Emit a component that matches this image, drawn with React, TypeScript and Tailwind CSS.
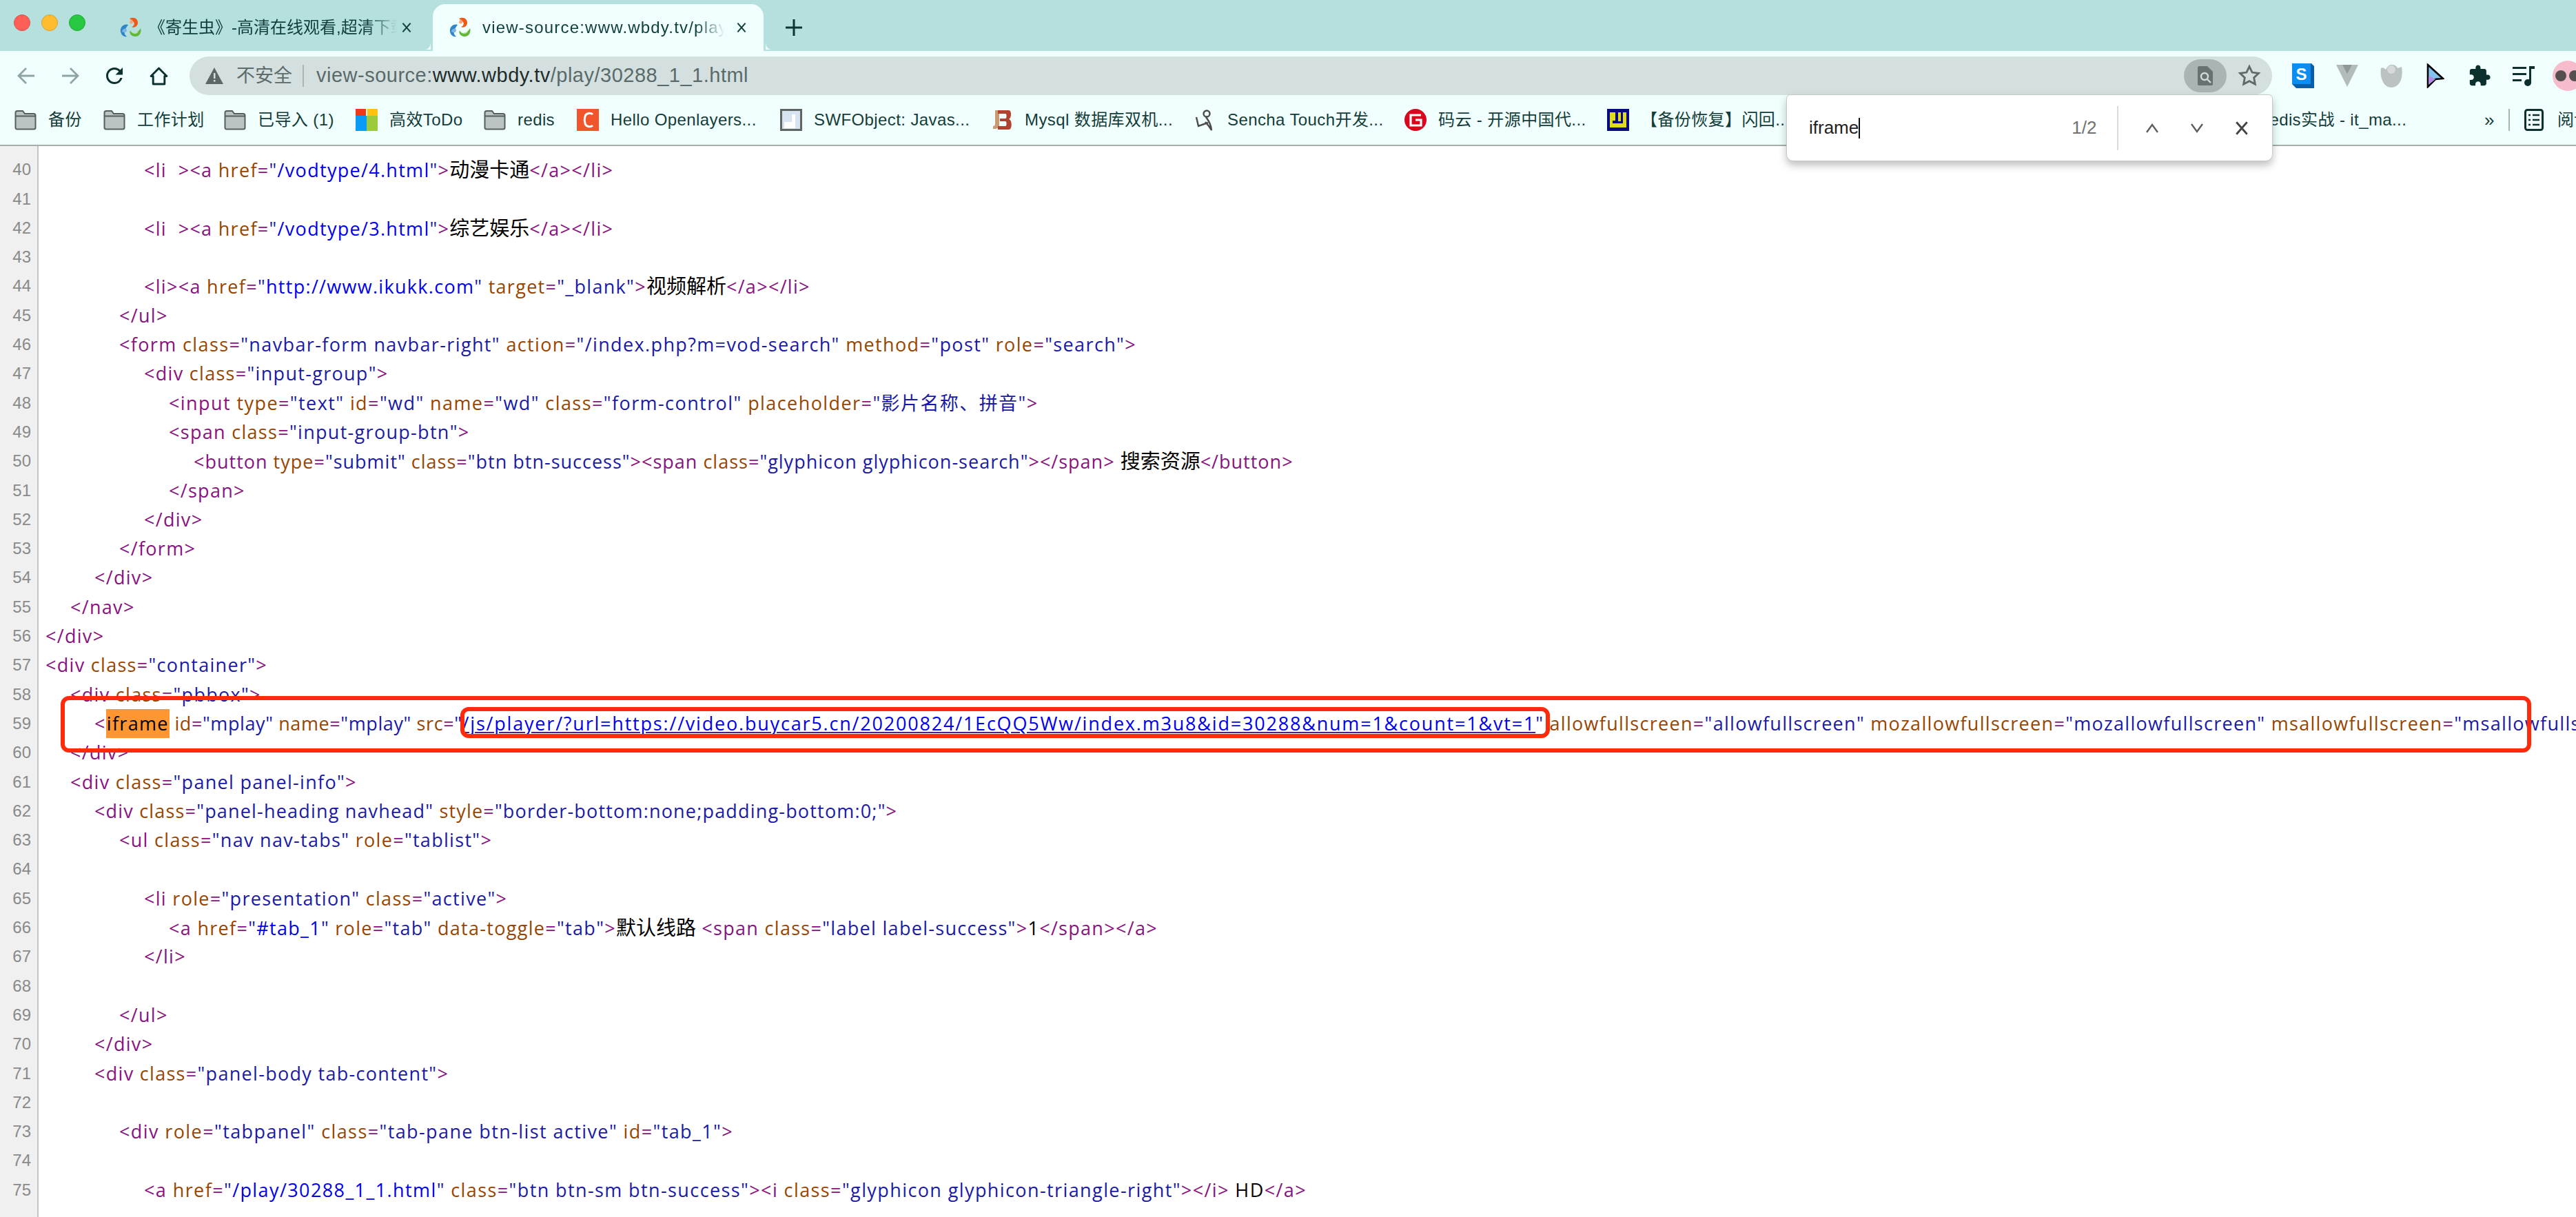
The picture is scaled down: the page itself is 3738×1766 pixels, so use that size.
import React from "react";

const SANS = "font-['Liberation_Sans','Noto_Sans_CJK_SC',sans-serif]";

const INDENT: Record<number, string> = {
  0: "pl-[10px]",
  2: "pl-[46px]",
  4: "pl-[81px]",
  6: "pl-[117px]",
  8: "pl-[153px]",
  10: "pl-[189px]",
  12: "pl-[225px]",
};

const TRACK: Record<number, string> = {
  46: "tracking-[1.37px]",
  48: "tracking-[1.42px]",
  50: "tracking-[1px]",
  62: "tracking-[1.18px]",
  73: "tracking-[1.4px]",
  75: "tracking-[1.4px]",
};

const LINES: [number, number, string][] = [
  [39, 0, ""],
  [40, 8, '<li  ><a href="/vodtype/4.html">动漫卡通</a></li>'],
  [41, 0, ""],
  [42, 8, '<li  ><a href="/vodtype/3.html">综艺娱乐</a></li>'],
  [43, 0, ""],
  [44, 8, '<li><a href="http://www.ikukk.com" target="_blank">视频解析</a></li>'],
  [45, 6, "</ul>"],
  [46, 6, '<form class="navbar-form navbar-right" action="/index.php?m=vod-search" method="post" role="search">'],
  [47, 8, '<div class="input-group">'],
  [48, 10, '<input type="text" id="wd" name="wd" class="form-control" placeholder="影片名称、拼音">'],
  [49, 10, '<span class="input-group-btn">'],
  [50, 12, '<button type="submit" class="btn btn-success"><span class="glyphicon glyphicon-search"></span> 搜索资源</button>'],
  [51, 10, "</span>"],
  [52, 8, "</div>"],
  [53, 6, "</form>"],
  [54, 4, "</div>"],
  [55, 2, "</nav>"],
  [56, 0, "</div>"],
  [57, 0, '<div class="container">'],
  [58, 2, '<div class="pbbox">'],
  [59, 4, '<iframe id="mplay" name="mplay" src="/js/player/?url=https://video.buycar5.cn/20200824/1EcQQ5Ww/index.m3u8&id=30288&num=1&count=1&vt=1" allowfullscreen="allowfullscreen" mozallowfullscreen="mozallowfullscreen" msallowfullscreen="msallowfullscreen" oallowfullscreen="oallowfullscreen"'],
  [60, 2, "</div>"],
  [61, 2, '<div class="panel panel-info">'],
  [62, 4, '<div class="panel-heading navhead" style="border-bottom:none;padding-bottom:0;">'],
  [63, 6, '<ul class="nav nav-tabs" role="tablist">'],
  [64, 0, ""],
  [65, 8, '<li role="presentation" class="active">'],
  [66, 10, '<a href="#tab_1" role="tab" data-toggle="tab">默认线路 <span class="label label-success">1</span></a>'],
  [67, 8, "</li>"],
  [68, 0, ""],
  [69, 6, "</ul>"],
  [70, 4, "</div>"],
  [71, 4, '<div class="panel-body tab-content">'],
  [72, 0, ""],
  [73, 6, '<div role="tabpanel" class="tab-pane btn-list active" id="tab_1">'],
  [74, 0, ""],
  [75, 8, '<a href="/play/30288_1_1.html" class="btn btn-sm btn-success"><i class="glyphicon glyphicon-triangle-right"></i> HD</a>'],
];

const TAG = "text-[#881280]";
const ATTR = "text-[#994500]";
const VAL = "text-[#1a1aa6]";
const LINK = "text-[#0000ee]";

function colorize(src: string): React.ReactNode[] {
  const re = /(<\/?[a-zA-Z0-9]+|\/?>)|([a-zA-Z-]+)(?==)|(=)|("[^"]*")|([\u3000-\u9fff]+)/g;
  const out: React.ReactNode[] = [];
  let last = 0;
  let attr = "";
  let m: RegExpExecArray | null;
  let k = 0;
  let pre = src.startsWith("<iframe") ? "tracking-[0.6px]" : "";
  while ((m = re.exec(src))) {
    if (m.index > last) out.push(<span key={k++} className={pre}>{src.slice(last, m.index)}</span>);
    last = m.index + m[0].length;
    if (m[1]) {
      if (m[1] === "<iframe") {
        out.push(<span key={k++} className={TAG}>{"<"}</span>);
        out.push(
          <span key={k++} className="inline-block w-[92px] bg-[#ff9632] text-center text-black">iframe</span>
        );
      } else out.push(<span key={k++} className={TAG}>{m[1]}</span>);
    } else if (m[2]) {
      attr = m[2];
      out.push(<span key={k++} className={`${ATTR} ${pre}`}>{m[2]}</span>);
    } else if (m[3]) {
      out.push(<span key={k++} className={`${TAG} ${pre}`}>=</span>);
    } else if (m[4]) {
      if (attr === "href" || attr === "src") {
        const inner = m[4].slice(1, -1);
        out.push(<span key={k++} className={`${VAL} ${pre}`}>"</span>);
        out.push(
          <span key={k++} className={attr === "src" ? `${LINK} tracking-[1.8px] underline decoration-[#551a8b]` : LINK}>{inner}</span>
        );
        out.push(<span key={k++} className={VAL}>"</span>);
        if (attr === "src") pre = "";
      } else out.push(<span key={k++} className={`${VAL} ${pre}`}>{m[4]}</span>);
    } else if (m[5]) {
      out.push(<span key={k++} className="text-[29px] tracking-normal text-black">{m[5]}</span>);
    }
  }
  if (last < src.length) out.push(<span key={k++} className="text-black">{src.slice(last)}</span>);
  return out;
}

function Favicon() {
  return (
    <svg viewBox="0 0 32 32" className="h-8 w-8 shrink-0">
      <path d="M14 3c6-3 12 0 12 6 0 5-5 8-9 6 3-1 5-4 3-7-1-2-4-3-6-5z" fill="#ee5a14" />
      <path d="M16 4c3 1 4 4 2 6-2 1-3 0-4-1 0-2 1-3 2-5z" fill="#f4a37a" />
      <path d="M12 12c-6-2-12 3-11 10 1 5 5 8 9 7-3-2-4-5-3-8 1-4 3-6 5-9z" fill="#2f86c9" />
      <path d="M3 22c0-3 3-5 6-4 2 1 1 4-1 5-2 0-3 0-5-1z" fill="#7db7e2" />
      <path d="M30 17c2 6-2 13-9 12-5-1-8-5-6-9 1 3 4 5 7 4 4-1 6-4 8-7z" fill="#63b83a" />
      <path d="M19 24c2 2 6 1 8-2-2 1-6 1-8 2z" fill="#bde3a3" />
    </svg>
  );
}

function CloseX({ cls }: { cls: string }) {
  return (
    <svg viewBox="0 0 20 20" className={cls} fill="none" stroke="currentColor" strokeWidth="2.6">
      <path d="M3 2l14 16M17 2 3 18" />
    </svg>
  );
}

function Folder() {
  return (
    <svg viewBox="0 0 32 30" className="h-[30px] w-8 shrink-0">
      <path d="M1.5 26V4.5c0-1.5 1-2.5 2.5-2.5h8l3 4h13c1.5 0 2.5 1 2.5 2.5V26c0 1.5-1 2.5-2.5 2.5H4c-1.5 0-2.5-1-2.5-2.5z" fill="#bcc4c3" stroke="#555e5e" strokeWidth="2" />
      <path d="M2 9.5h28" stroke="#555e5e" strokeWidth="2" />
    </svg>
  );
}

function Ms() {
  return (
    <svg viewBox="0 0 32 32" className="h-8 w-8 shrink-0">
      <rect x="0" y="0" width="15" height="10" fill="#f03a17" />
      <rect x="17" y="0" width="15" height="10" fill="#ffc20e" />
      <rect x="0" y="10" width="16" height="22" fill="#0a9cf5" />
      <rect x="16" y="10" width="16" height="22" fill="#9bcb3c" />
    </svg>
  );
}

function CIcon() {
  return (
    <svg viewBox="0 0 32 32" className="h-8 w-8 shrink-0">
      <rect width="32" height="32" fill="#f2552c" />
      <path d="M23 8c-3-3-10-2-11 3-1 3-1 7 0 10 1 5 8 6 11 3" fill="none" stroke="#fff" strokeWidth="3" />
    </svg>
  );
}

function DocIcon() {
  return (
    <svg viewBox="0 0 32 32" className="h-8 w-8 shrink-0">
      <rect x="1.5" y="1.5" width="29" height="29" fill="#d8e3f2" stroke="#5f6563" strokeWidth="3" />
      <rect x="17" y="8" width="5" height="20" fill="#fff" />
      <rect x="6" y="19" width="16" height="9" fill="#fff" />
    </svg>
  );
}

function JbIcon() {
  return (
    <svg viewBox="0 0 32 32" className="h-8 w-8 shrink-0">
      <path d="M6 2h6v22c0 3-2 5-9 5v-4c2 0 3-1 3-3z" fill="#c99a70" />
      <path d="M10 2h16c4 0 4 11 0 13 5 1 5 15 0 15H10v-5h11c2 0 2-7 0-7h-8v-4h8c2 0 2-7 0-7H10z" fill="#b0432f" />
    </svg>
  );
}

function SenchaIcon() {
  return (
    <svg viewBox="0 0 32 32" className="h-8 w-8 shrink-0" fill="none" stroke="#4a4a4a" strokeWidth="2.4">
      <circle cx="19" cy="7" r="4.5" />
      <path d="M18 12c2 3 7 8 8 19-3-5-8-11-9-12" />
      <path d="M4 12l3 13 14-5" />
    </svg>
  );
}

function GIcon() {
  return (
    <svg viewBox="0 0 32 32" className="h-8 w-8 shrink-0">
      <circle cx="16" cy="16" r="16" fill="#d9061e" />
      <path d="M24 9H9v15h15v-8h-8" fill="none" stroke="#fff" strokeWidth="3.2" />
    </svg>
  );
}

function JIcon() {
  return (
    <svg viewBox="0 0 32 32" className="h-8 w-8 shrink-0">
      <rect width="32" height="32" fill="#0a0a80" />
      <path d="M4 5h24v22H4z" fill="#e0dc1a" />
      <path d="M12 5h4v13h4V5h3v16H8v-4h4z" fill="#0a0a80" />
    </svg>
  );
}

const BOOKMARKS: { icon: React.ReactNode; label: string; w: string; tw: string }[] = [
  { icon: <Folder />, label: "备份", w: "w-[129px]", tw: "w-[60px]" },
  { icon: <Folder />, label: "工作计划", w: "w-[175px]", tw: "w-[110px]" },
  { icon: <Folder />, label: "已导入 (1)", w: "w-[191px]", tw: "w-[125px]" },
  { icon: <Ms />, label: "高效ToDo", w: "w-[186px]", tw: "w-[120px]" },
  { icon: <Folder />, label: "redis", w: "w-[135px]", tw: "w-[70px]" },
  { icon: <CIcon />, label: "Hello Openlayers...", w: "w-[295px]", tw: "w-[230px]" },
  { icon: <DocIcon />, label: "SWFObject: Javas...", w: "w-[306px]", tw: "w-[240px]" },
  { icon: <JbIcon />, label: "Mysql 数据库双机...", w: "w-[294px]", tw: "w-[230px]" },
  { icon: <SenchaIcon />, label: "Sencha Touch开发...", w: "w-[306px]", tw: "w-[240px]" },
  { icon: <GIcon />, label: "码云 - 开源中国代...", w: "w-[294px]", tw: "w-[230px]" },
  { icon: <JIcon />, label: "【备份恢复】闪回...", w: "w-[330px]", tw: "w-[260px]" },
];

export default function App() {
  return (
    <div className={`relative flex h-[1766px] w-[3738px] flex-col overflow-hidden bg-white ${SANS}`}>
      {/* tab strip */}
      <div className="flex h-[74px] shrink-0 items-end bg-[#b5e0dd] text-[24px] text-[#10403d]">
        <div className="flex h-full w-[148px] shrink-0 gap-4 pl-5 pt-[21px]">
          <div className="h-6 w-6 rounded-full border border-[#d9504f] bg-[#ff5f57]" />
          <div className="h-6 w-6 rounded-full border border-[#dba32a] bg-[#febc2e]" />
          <div className="h-6 w-6 rounded-full border border-[#22a83a] bg-[#28c840]" />
        </div>
        <div className="flex h-[68px] w-[480px] shrink-0 items-center pl-[26px]">
          <Favicon />
          <div className="ml-[10px] w-[360px] shrink-0 overflow-hidden whitespace-nowrap [mask-image:linear-gradient(to_right,black_88%,transparent)]">
            《寄生虫》-高清在线观看,超清下载
          </div>
          <CloseX cls="ml-[6px] h-[22px] w-4 shrink-0" />
        </div>
        <div className="relative flex h-[68px] w-[480px] shrink-0 items-center rounded-t-[18px] bg-[#f0fffe] pl-6">
          <svg viewBox="0 0 16 16" className="absolute bottom-0 left-[-12px] h-4 w-3">
            <path d="M12 0v16H0c8 0 12-6 12-16z" fill="#f0fffe" />
          </svg>
          <svg viewBox="0 0 16 16" className="absolute bottom-0 right-[-12px] h-4 w-3">
            <path d="M4 0v16h12C8 16 4 10 4 0z" fill="#f0fffe" />
          </svg>
          <Favicon />
          <div className="ml-4 w-[352px] shrink-0 overflow-hidden whitespace-nowrap tracking-[1.2px] [mask-image:linear-gradient(to_right,black_88%,transparent)]">
            view-source:www.wbdy.tv/play/30288_1_1.html
          </div>
          <CloseX cls="ml-[16px] h-[22px] w-4 shrink-0" />
        </div>
        <div className="flex h-[68px] w-[88px] items-center justify-center">
          <svg viewBox="0 0 26 26" className="h-[26px] w-[26px]" stroke="#0c3533" strokeWidth="3">
            <path d="M13 1v24M1 13h24" />
          </svg>
        </div>
      </div>

      {/* toolbar */}
      <div className="flex h-[138px] shrink-0 flex-col border-b-2 border-[#a8adac] bg-[#f0fffe] text-[#143c39]">
        <div className="flex h-[72px] shrink-0 items-start pl-[6px] pt-2">
          <div className="flex h-14 w-16 shrink-0 items-center justify-center">
            <svg viewBox="0 0 26 26" className="h-[26px] w-[26px]" fill="none" stroke="#8fa5a3" strokeWidth="2.8">
              <path d="M25 13H3M13 2 2 13l11 11" />
            </svg>
          </div>
          <div className="flex h-14 w-16 shrink-0 items-center justify-center">
            <svg viewBox="0 0 26 26" className="h-[26px] w-[26px]" fill="none" stroke="#8fa5a3" strokeWidth="2.8">
              <path d="M1 13h22M13 2l11 11-11 11" />
            </svg>
          </div>
          <div className="flex h-14 w-16 shrink-0 items-center justify-center">
            <svg viewBox="0 0 24 24" className="h-9 w-9" fill="#0c302e">
              <path d="M17.65 6.35A7.958 7.958 0 0 0 12 4c-4.42 0-7.99 3.58-7.99 8s3.57 8 7.99 8c3.73 0 6.84-2.55 7.73-6h-2.08A5.99 5.99 0 0 1 12 18c-3.31 0-6-2.69-6-6s2.69-6 6-6c1.66 0 3.14.69 4.22 1.78L13 11h7V4l-2.35 2.35z" />
            </svg>
          </div>
          <div className="flex h-14 w-16 shrink-0 items-center justify-center">
            <svg viewBox="0 0 26 26" className="h-[27px] w-[27px]" fill="none" stroke="#0c302e" strokeWidth="2.8" strokeLinejoin="round">
              <path d="M2 13 13 2l11 11h-3v11H5V13z" />
            </svg>
          </div>

          <div className="ml-[13px] flex h-14 w-[3022px] shrink-0 items-center rounded-full bg-[#d4e0e0] pl-[23px]">
            <svg viewBox="0 0 26 24" className="h-6 w-[26px] shrink-0">
              <path d="M13 0 26 24H0z" fill="#5d6766" />
              <rect x="12" y="8" width="2.5" height="8" fill="#d4e0e0" />
              <rect x="12" y="18" width="2.5" height="2.5" fill="#d4e0e0" />
            </svg>
            <span className="ml-[19px] text-[27px] text-[#5d6b6a]">不安全</span>
            <div className="ml-[15px] h-8 w-[2px] bg-[#aab6b5]" />
            <div className="ml-[18px] flex-1 whitespace-nowrap text-[29px] tracking-[0.5px]">
              <span className="text-[#5a6a69]">view-source:</span>
              <span className="text-[#1d2b2a]">www.wbdy.tv</span>
              <span className="text-[#5a6a69]">/play/30288_1_1.html</span>
            </div>
            <div className="flex h-12 w-[62px] shrink-0 items-center justify-center rounded-full bg-[#a9b5b4]">
              <svg viewBox="0 0 22 28" className="h-7 w-[22px]">
                <path d="M2 0h12l8 8v18c0 1-1 2-2 2H2c-1 0-2-1-2-2V2C0 1 1 0 2 0z" fill="#667372" />
                <circle cx="10" cy="15" r="5" fill="none" stroke="#d0dad9" strokeWidth="2.4" />
                <path d="m14 19 5 5" stroke="#d0dad9" strokeWidth="2.4" />
              </svg>
            </div>
            <div className="flex w-[66px] shrink-0 items-center justify-center">
              <svg viewBox="0 0 24 24" className="h-[34px] w-[34px]" fill="none" stroke="#5e6b6a" strokeWidth="2">
                <path d="m12 2.5 2.9 6 6.6.9-4.8 4.6 1.2 6.5-5.9-3.1-5.9 3.1 1.2-6.5L2.5 9.4l6.6-.9z" />
              </svg>
            </div>
          </div>

          <div className="ml-[13px] flex h-14 shrink-0 items-center">
            <div className="flex w-16 shrink-0 items-center justify-center">
              <svg viewBox="0 0 32 36" className="h-9 w-8">
                <path d="M27 0h1l4 4v32H6l-6-6z" fill="#0a5ea8" />
                <rect width="27" height="30" fill="#0b8df2" />
                <text x="13.5" y="24" textAnchor="middle" fontFamily="Liberation Sans" fontWeight="700" fontSize="24" fill="#fff">S</text>
              </svg>
            </div>
            <div className="flex w-16 shrink-0 items-center justify-center">
              <svg viewBox="0 0 32 32" className="h-8 w-8">
                <path d="M0 0h32L16 32z" fill="#b4bcbb" />
                <path d="M9 0h14l-7 13z" fill="#8f9897" />
              </svg>
            </div>
            <div className="flex w-16 shrink-0 items-center justify-center">
              <svg viewBox="0 0 32 34" className="h-[34px] w-8">
                <path d="M1 6c3-2 5 0 7 2 2-4 6-8 9-7 4 0 7 2 8 5l6-2c2 12 0 29-15 30C4 34-1 18 1 6z" fill="#bcc2c1" />
                <circle cx="16" cy="8" r="6" fill="#d6dad9" />
              </svg>
            </div>
            <div className="flex w-16 shrink-0 items-center justify-center">
              <svg viewBox="0 0 26 36" className="h-9 w-[26px]">
                <path d="M2 2 24 22 13 23 2 34z" fill="#84c3ef" stroke="#000" strokeWidth="2.6" />
                <path d="M3 18 13 23 3 31z" fill="#b48be0" />
              </svg>
            </div>
            <div className="flex w-16 shrink-0 items-center justify-center">
              <svg viewBox="0 0 24 24" className="h-[34px] w-[34px]" fill="#0c302e">
                <path d="M20.5 11H19V7c0-1.1-.9-2-2-2h-4V3.5C13 2.12 11.88 1 10.5 1S8 2.12 8 3.5V5H4c-1.1 0-1.99.9-1.99 2v3.8H3.5c1.49 0 2.7 1.21 2.7 2.7s-1.21 2.7-2.7 2.7H2V20c0 1.1.9 2 2 2h3.8v-1.5c0-1.49 1.21-2.7 2.7-2.7 1.49 0 2.7 1.21 2.7 2.7V22H17c1.1 0 2-.9 2-2v-4h1.5c1.38 0 2.5-1.12 2.5-2.5S21.88 11 20.5 11z" />
              </svg>
            </div>
            <div className="flex w-16 shrink-0 items-center justify-center">
              <svg viewBox="0 0 32 30" className="h-[30px] w-8" fill="#0c302e">
                <rect x="0" y="2" width="20" height="3" />
                <rect x="0" y="11" width="20" height="3" />
                <rect x="0" y="20" width="13" height="3" />
                <rect x="24" y="2" width="3" height="24" />
                <rect x="24" y="1" width="8" height="4" />
                <circle cx="22" cy="25" r="5" />
              </svg>
            </div>
            <div className="flex w-16 shrink-0 items-center justify-center">
              <div className="flex h-11 w-11 shrink-0 items-center justify-center rounded-full bg-[#f7bccb]">
                <svg viewBox="0 0 44 20" className="h-5 w-11 shrink-0">
                  <circle cx="12" cy="10" r="8" fill="#55504e" />
                  <circle cx="32" cy="10" r="8" fill="#55504e" />
                </svg>
              </div>
            </div>
          </div>
        </div>

        {/* bookmarks */}
        <div className="flex h-[56px] shrink-0 items-center whitespace-nowrap pl-[21px] text-[24px] tracking-[0.4px]">
          {BOOKMARKS.map((b) => (
            <div key={b.label} className={`flex shrink-0 items-center ${b.w}`}>
              {b.icon}
              <span className={`ml-[17px] shrink-0 ${b.tw} overflow-hidden`}>{b.label}</span>
            </div>
          ))}
          <span className="ml-[623px] w-[205px] shrink-0 overflow-hidden">redis实战 - it_ma...</span>
          <span className="ml-[115px] shrink-0 text-[26px]">»</span>
          <div className="ml-[20px] h-8 w-[2px] shrink-0 bg-[#a7b5b4]" />
          <svg viewBox="0 0 28 32" className="ml-[21px] h-8 w-7 shrink-0" fill="none" stroke="#0c302e" strokeWidth="3">
            <rect x="1.5" y="1.5" width="25" height="29" rx="3" />
            <path d="M6 9h3M12 9h10M6 16h3M12 16h10M6 23h3M12 23h10" strokeWidth="2.4" />
          </svg>
          <span className="ml-[20px] shrink-0">阅读清单</span>
        </div>
      </div>

      {/* source view */}
      <div className="relative flex-1 overflow-hidden">
        <div className="mt-[-29px] font-['Open_Sans','Noto_Sans_CJK_SC',sans-serif] text-[27px] leading-[42.3px] tracking-[1.3px]">
          {LINES.map(([n, ind, src]) => (
            <div key={n} className="flex h-[42.3px]">
              <div className={`w-[56px] shrink-0 border-r-2 border-[#c4c4c4] bg-[#f0f0f0] pr-[9px] text-right text-[24px] tracking-normal text-[#8a8a8a] ${SANS}`}>
                {n}
              </div>
              <div className={`whitespace-pre ${INDENT[ind]} ${TRACK[n] ?? ""}`}>{colorize(src)}</div>
            </div>
          ))}
          <div className="h-[42.3px] w-[56px] border-r-2 border-[#c4c4c4] bg-[#f0f0f0]" />
        </div>
        <div className="absolute left-[88px] top-[798px] h-[82px] w-[3585px] rounded-[12px] border-[6px] border-[#ff2a0a]" />
        <div className="absolute left-[668px] top-[814px] h-[45px] w-[1581px] rounded-[12px] border-[6px] border-[#ff2a0a]" />
      </div>

      {/* find bar */}
      <div className="absolute left-[2592px] top-[137px] flex h-[97px] w-[706px] items-center rounded-b-[10px] rounded-t-[6px] border border-[#c6cbca] bg-white pl-[32px] text-[26px] shadow-[0_6px_12px_rgba(0,0,0,0.25)]">
        <span className="text-[#222]">iframe</span>
        <div className="h-[30px] w-[2px] bg-[#111]" />
        <span className="ml-[307px] w-[35px] text-[#6f7372]">1/2</span>
        <div className="ml-[31px] h-16 w-[2px] bg-[#dadcdc]" />
        <svg viewBox="0 0 20 14" className="ml-[39px] h-[14px] w-5" fill="none" stroke="#5b5f5f" strokeWidth="2.4">
          <path d="M2 13 10 2l8 11" />
        </svg>
        <svg viewBox="0 0 20 14" className="ml-[45px] h-[14px] w-5" fill="none" stroke="#5b5f5f" strokeWidth="2.4">
          <path d="M2 1l8 11 8-11" />
        </svg>
        <CloseX cls="ml-[44px] h-[22px] w-[22px] text-[#444]" />
      </div>
    </div>
  );
}
